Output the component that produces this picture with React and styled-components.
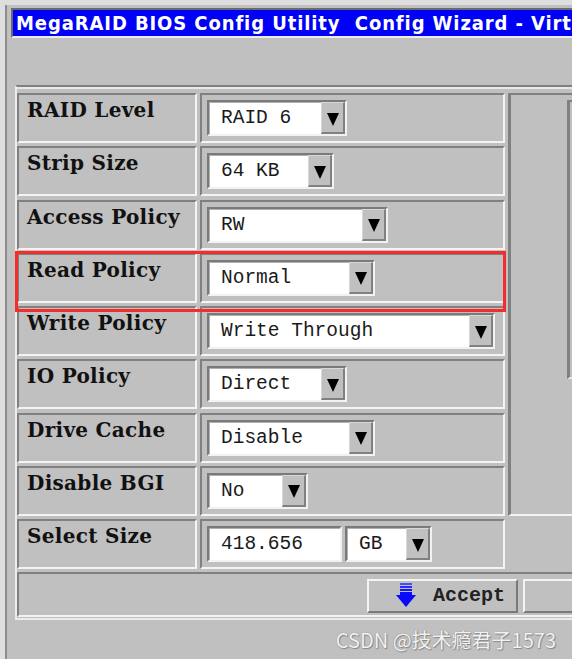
import React from "react";
import styled, { createGlobalStyle } from "styled-components";

const Global = createGlobalStyle`
  html, body {
    margin: 0;
    padding: 0;
    background: #c0c0c0;
  }
`;

const Window = styled.div`
  width: 572px;
  height: 659px;
  box-sizing: border-box;
  overflow: hidden;
  background: #c0c0c0;
  border-top: 5px solid #dedede;
  border-left: 5px solid #dedede;
`;

const Inner = styled.div`
  height: 100%;
  border-left: 2px solid #8c8c8c;
  display: flex;
  flex-direction: column;
`;

const TitleBar = styled.div`
  margin: 3px 0 0 4px;
  height: 26px;
  background: #0000f6;
  border-top: 2px solid #6a6a6a;
  border-left: 2px solid #6a6a6a;
  border-bottom: 2px solid #ececec;
  color: #fff;
  font-family: "DejaVu Sans Condensed", "DejaVu Sans", sans-serif;
  font-weight: bold;
  font-size: 20px;
  letter-spacing: 0.9px;
  line-height: 26px;
  padding-left: 3px;
  white-space: pre;
  overflow: hidden;
`;

const Spacer = styled.div`
  height: 47px;
`;

const Panel = styled.div`
  margin-left: 8px;
  margin-right: -60px;
  padding: 6px 0 1px 0;
  border-top: 2px solid #808080;
  border-left: 2px solid #ececec;
  border-bottom: 2px solid #ececec;
  box-shadow: inset 0 2px 0 #e8e8e8;
`;

const Grid = styled.div`
  display: grid;
  grid-template-columns: 488px 1fr;
  grid-template-rows: repeat(9, 50px) 45px;
  column-gap: 3px;
  row-gap: 3.25px;
`;

const Row = styled.div`
  grid-column: 1;
  display: grid;
  grid-template-columns: 180px 305px;
  column-gap: 3px;
  position: relative;

  ${(p) =>
    p.$highlight &&
    `
    &::after {
      content: "";
      position: absolute;
      top: -2px;
      left: -2px;
      right: -1px;
      bottom: -9px;
      border: 3px solid #f42c2c;
      pointer-events: none;
      z-index: 2;
    }
  `}
`;

const Cell = styled.div`
  box-sizing: border-box;
  border-top: 2px solid #808080;
  border-left: 2px solid #808080;
  border-bottom: 2px solid #f4f4f4;
  border-right: 2px solid #f4f4f4;
  background: #c0c0c0;
`;

const Label = styled(Cell)`
  padding: 3px 0 0 8px;
  font-family: "DejaVu Serif", serif;
  font-weight: bold;
  font-size: 20px;
  letter-spacing: 0.3px;
  line-height: 24px;
  color: #111;
  white-space: nowrap;
`;

const Value = styled(Cell)`
  padding: 5px 0 0 5px;
  display: flex;
  gap: 3px;
`;

const Field = styled.div`
  box-sizing: border-box;
  width: ${(p) => p.$w}px;
  height: 36px;
  display: flex;
  background: #fff;
  border-top: 2px solid #7a7a7a;
  border-left: 2px solid #7a7a7a;
  border-bottom: 2px solid #f2f2f2;
  border-right: 2px solid #f2f2f2;
  box-shadow: inset 1px 1px 0 #b0b0b0;
`;

const FieldText = styled.div`
  flex: 1;
  padding: 3px 0 0 12px;
  font-family: "Liberation Mono", "DejaVu Sans Mono", monospace;
  font-size: 19.5px;
  line-height: 26px;
  color: #1a1a1a;
  white-space: pre;
  overflow: hidden;
`;

const ArrowButton = styled.div`
  box-sizing: border-box;
  width: 24px;
  display: flex;
  align-items: center;
  justify-content: center;
  background: #c0c0c0;
  border-top: 1px solid #d8d8d8;
  border-left: 1px solid #d8d8d8;
  border-right: 2px solid #808080;
  border-bottom: 2px solid #808080;
  padding-top: 3px;
`;

const Triangle = styled.div`
  width: 0;
  height: 0;
  border-left: 6px solid transparent;
  border-right: 6px solid transparent;
  border-top: 13px solid #000;
`;

const SidePanel = styled.div`
  grid-column: 2;
  grid-row: 1 / 9;
  border-top: 2px solid #808080;
  border-left: 3px solid #808080;
  border-bottom: 2px solid #f4f4f4;
  padding: 5px 0 0 56px;
`;

const ListBox = styled.div`
  height: 275px;
  border-top: 2px solid #808080;
  border-left: 3px solid #808080;
  border-bottom: 2px solid #e8e8e8;
`;

const ButtonRow = styled(Cell)`
  grid-column: 1 / -1;
  display: flex;
  align-items: center;
  gap: 5px;
  padding: 2px 0 0 348px;
`;

const Button = styled.div`
  box-sizing: border-box;
  width: ${(p) => p.$w}px;
  height: 34px;
  display: flex;
  align-items: center;
  gap: 17px;
  padding-left: 27px;
  background: #c0c0c0;
  border-top: 2px solid #f4f4f4;
  border-left: 2px solid #f4f4f4;
  border-bottom: 2px solid #7a7a7a;
  border-right: 2px solid #7a7a7a;
  font-family: "Liberation Mono", "DejaVu Sans Mono", monospace;
  font-weight: bold;
  font-size: 20px;
  color: #222;
`;

const Footer = styled.div`
  flex: 1;
  display: flex;
  align-items: center;
  justify-content: flex-end;
  padding-right: 16px;
  font-family: "Noto Sans CJK SC", "Noto Sans", sans-serif;
  font-size: 20px;
  color: #f2f2f2;
  text-shadow: 0 0 1px #777, 1px 1px 1px #8a8a8a;
`;

const Dropdown = ({ w, children }) => (
  <Field $w={w}>
    <FieldText>{children}</FieldText>
    <ArrowButton>
      <Triangle />
    </ArrowButton>
  </Field>
);

const AcceptIcon = () => (
  <svg width="20" height="25" viewBox="0 0 20 25">
    <rect x="4" y="0" width="12" height="2" fill="#4a4aff" />
    <rect x="4" y="3" width="12" height="2" fill="#2a2aff" />
    <rect x="4" y="6" width="12" height="2" fill="#1515ff" />
    <rect x="4" y="9" width="12" height="3" fill="#0a0aff" />
    <polygon points="0,12 20,12 10,24" fill="#0808ff" />
  </svg>
);

const rows = [
  ["RAID Level", "RAID 6", 140],
  ["Strip Size", "64 KB", 127],
  ["Access Policy", "RW", 181],
  ["Read Policy", "Normal", 168, true],
  ["Write Policy", "Write Through", 288],
  ["IO Policy", "Direct", 140],
  ["Drive Cache", "Disable", 168],
  ["Disable BGI", "No", 101],
];

export default function App() {
  return (
    <>
      <Global />
      <Window>
        <Inner>
          <TitleBar>MegaRAID BIOS Config Utility  Config Wizard - Virtual Drive Definition</TitleBar>
          <Spacer />
          <Panel>
            <Grid>
              {rows.map(([label, value, w, hl]) => (
                <Row key={label} $highlight={hl}>
                  <Label>{label}</Label>
                  <Value>
                    <Dropdown w={w}>{value}</Dropdown>
                  </Value>
                </Row>
              ))}
              <SidePanel>
                <ListBox />
              </SidePanel>
              <Row>
                <Label>Select Size</Label>
                <Value>
                  <Field $w={135}>
                    <FieldText>418.656</FieldText>
                  </Field>
                  <Dropdown w={87}>GB</Dropdown>
                </Value>
              </Row>
              <ButtonRow>
                <Button $w={173}>
                  <AcceptIcon />
                  Accept
                </Button>
                <Button $w={120} />
              </ButtonRow>
            </Grid>
          </Panel>
          <Footer>CSDN @技术瘾君子1573</Footer>
        </Inner>
      </Window>
    </>
  );
}
